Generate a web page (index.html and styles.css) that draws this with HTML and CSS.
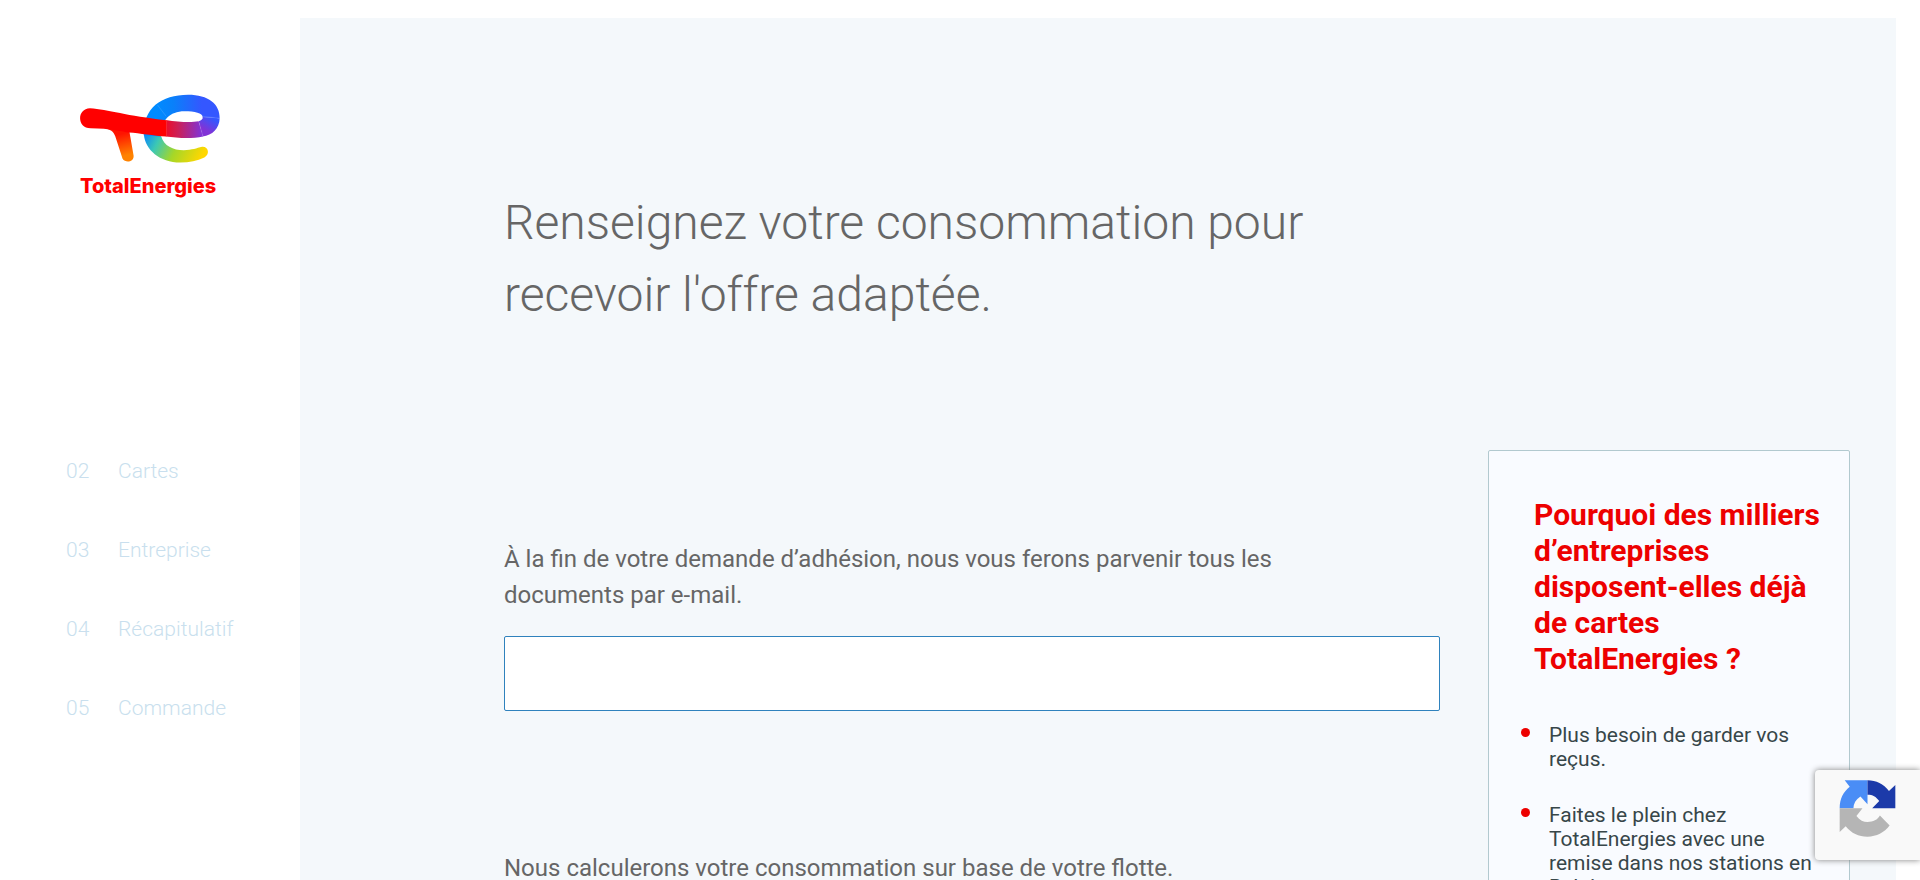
FILE: index.html
```html
<!DOCTYPE html>
<html lang="fr">
<head>
<meta charset="utf-8">
<title>TotalEnergies – Consommation</title>
<link rel="stylesheet" href="styles.css">
</head>
<body>
<div class="page">
  <aside class="sidebar">
    <a class="logo" href="#">
      <svg class="logo-mark" viewBox="60 40 424 206" aria-hidden="true">
        <defs>
          <linearGradient id="leg" gradientUnits="userSpaceOnUse" x1="185" y1="160" x2="205" y2="240"><stop offset="0" stop-color="#ff1400"/><stop offset=".8" stop-color="#ff8200"/></linearGradient>
          <linearGradient id="ring" gradientUnits="userSpaceOnUse" x1="290" y1="80" x2="460" y2="80"><stop offset="0" stop-color="#008bff"/><stop offset=".3" stop-color="#0a80fa"/><stop offset=".8" stop-color="#3457ff"/></linearGradient>
          <linearGradient id="bowl" gradientUnits="userSpaceOnUse" x1="262" y1="160" x2="420" y2="240"><stop offset="0" stop-color="#1091f0"/><stop offset=".22" stop-color="#3cc8b4"/><stop offset=".55" stop-color="#a5d728"/><stop offset="1" stop-color="#ffd700"/></linearGradient>
          <linearGradient id="bar" gradientUnits="userSpaceOnUse" x1="318" y1="145" x2="425" y2="145"><stop offset="0" stop-color="#ed0c28"/><stop offset=".35" stop-color="#cb2058"/><stop offset="1" stop-color="#8133d6"/></linearGradient>
          <linearGradient id="turn" gradientUnits="userSpaceOnUse" x1="462" y1="115" x2="440" y2="150"><stop offset="0" stop-color="#3457ff"/><stop offset="1" stop-color="#8133d6"/></linearGradient>
        </defs>
        <path d="M252 160C255 207 300 246 362 246C390 246 412 241 434 231C452 221 446 197 427 199C410 203 398 209 372 209C340 209 312 196 304 167Z" fill="url(#bowl)"/>
        <path d="M252 165C248 82 305 42 385 42C446 42 481 70 480 113L429 110C429 98 405 92 374 92C330 92 303 119 303 168Z" fill="url(#ring)"/>
        <path d="M429 109L480 113C479 144 458 164 429 168L417 122C425 119 430 115 429 109Z" fill="url(#turn)"/>
        <path d="M318 118C360 125 395 126 417 122L430 168C397 175 355 173 318 168Z" fill="url(#bar)"/>
        <path d="M130 142C153 146 160 152 166 167L188 235C196 248 224 246 221 224L208 150Z" fill="url(#leg)"/>
        <path d="M90 83C145 87 200 106 320 119V168C280 166 240 158 207 156C190 154 150 143 92 143C50 143 50 84 90 83Z" fill="#f00"/>
        <path d="M293 73L319 107M429 107L480 113M417 122L430 168M320 118V168" stroke="#fff" stroke-opacity=".2" stroke-width="2" fill="none"/>
      </svg>
      <span class="logo-name">TotalEnergies</span>
    </a>
    <nav>
      <ol class="steps">
        <li><span class="step-number">02</span><span>Cartes</span></li>
        <li><span class="step-number">03</span><span>Entreprise</span></li>
        <li><span class="step-number">04</span><span>Récapitulatif</span></li>
        <li><span class="step-number">05</span><span>Commande</span></li>
      </ol>
    </nav>
  </aside>
  <main class="content">
    <h1>Renseignez votre consommation pour recevoir l'offre adaptée.</h1>
    <div class="columns">
      <form class="form">
        <div class="field">
          <label for="email">À la fin de votre demande d’adhésion, nous vous ferons parvenir tous les documents par e-mail.</label>
          <input id="email" type="email">
        </div>
        <p class="note">Nous calculerons votre consommation sur base de votre flotte.</p>
      </form>
      <section class="card">
        <h2>Pourquoi des milliers d’entreprises disposent-elles déjà de cartes TotalEnergies ?</h2>
        <ul>
          <li>Plus besoin de garder vos reçus.</li>
          <li>Faites le plein chez TotalEnergies avec une remise dans nos stations en Belgique.</li>
        </ul>
      </section>
    </div>
  </main>
</div>
<div class="captcha">
  <svg viewBox="180 90 168 170" role="img" aria-label="reCAPTCHA">
    <path d="M264 91V162L243 139C229 149 222 160 222 174H181C181 146 192 125 211 110L196 91Z" fill="#4a8df6"/>
    <path d="M264 91C290 91 312 102 328 123L347 105V174H278L299 153C289 139 280 134 264 134Z" fill="#1c3aa9"/>
    <path d="M181 174H249L231 197C241 210 252 215 264 215C281 215 294 209 301 196L330 226C314 247 291 259 264 259C237 259 216 249 199 228L181 245Z" fill="#b5b5b5"/>
  </svg>
</div>
</body>
</html>
```
FILE: styles.css
```css
* { box-sizing: border-box; }
html, body { height: 100%; }
body {
  margin: 0;
  overflow: hidden;
  background: #fff;
  color: #666;
  font-family: Roboto, "Liberation Sans", sans-serif;
}
h1, h2, p, ul, ol { margin: 0; padding: 0; }
ul, ol { list-style: none; }
.page {
  display: flex;
  min-height: 100%;
  padding: 18px 24px 0 0;
}
.sidebar {
  flex: 0 0 300px;
  padding-top: 76px;
}
.logo {
  display: block;
  width: 141px;
  margin-left: 80px;
  text-decoration: none;
}
.logo-mark { display: block; width: 100%; }
.logo-name {
  display: block;
  margin-top: 11px;
  color: #f00;
  font: 800 20px/24px Inter, sans-serif;
}
.steps {
  display: grid;
  gap: 54px;
  margin: 261px 0 0 66px;
  color: #c9dfee;
  font-size: 21px;
  font-weight: 300;
  line-height: 25px;
}
.steps li { display: flex; }
.step-number { flex: 0 0 52px; }
.content {
  flex: 1;
  background: #f4f8fb;
  padding: 169px 46px 0 204px;
}
h1 {
  max-width: 936px;
  font-size: 48px;
  font-weight: 300;
  line-height: 72px;
}
.columns {
  display: flex;
  align-items: flex-start;
  gap: 48px;
  margin-top: 119px;
}
.form {
  flex: 1;
  padding-top: 91px;
}
.field label, .note {
  display: block;
  max-width: 800px;
  font-size: 24px;
  line-height: 36px;
}
.field input {
  display: block;
  width: 100%;
  height: 75px;
  margin-top: 23px;
  padding: 0 24px;
  border: 1px solid #2f82bd;
  border-radius: 2px;
  background: #fff;
  color: inherit;
  font: inherit;
  font-size: 24px;
}
.note { margin-top: 139px; }
.card {
  flex: 0 0 362px;
  padding: 46px 24px 48px 45px;
  border: 1px solid #b2c9cf;
  border-radius: 2px;
  background: #f9fbff;
}
h2 {
  color: #ed0000;
  font-size: 30px;
  font-weight: 700;
  line-height: 36px;
}
.card ul {
  display: grid;
  gap: 32px;
  margin: 46px 0 0 -13px;
  color: #374649;
  font-size: 21px;
  line-height: 24px;
}
.card li {
  display: flex;
  gap: 19px;
}
.card li::before {
  content: "";
  flex: none;
  width: 9px;
  height: 9px;
  margin-top: 5px;
  border-radius: 50%;
  background: #ed0000;
}
.captcha {
  position: fixed;
  right: 0;
  bottom: 20px;
  width: 105px;
  height: 90px;
  padding: 10px 24px;
  border-radius: 4px 0 0 4px;
  background: #f9f9f9;
  box-shadow: 0 0 6px #808080;
}
.captcha svg { display: block; width: 57px; height: 57px; }
```
